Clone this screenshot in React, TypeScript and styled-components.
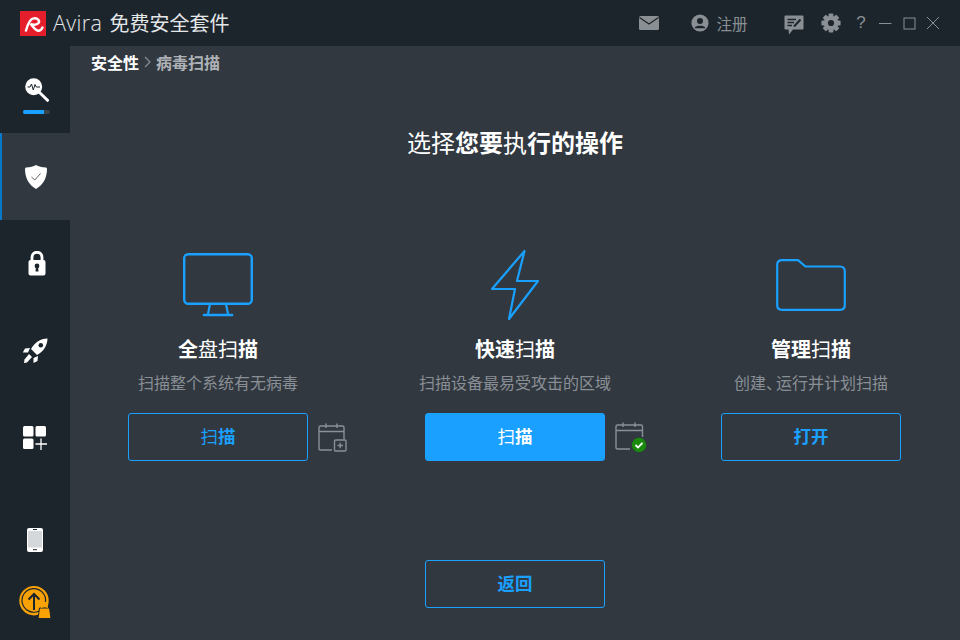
import React from 'react';
import styled, {createGlobalStyle} from "styled-components";

const GlobalStyle = createGlobalStyle`
  html, body {
    margin: 0;
    padding: 0;
    background: #1c252c;
  }

  * {
    box-sizing: border-box;
  }
`;

const Window = styled.div`
  width: 960px;
  height: 640px;
  display: grid;
  grid-template-columns: 70px 1fr;
  grid-template-rows: 46px 1fr;
  background: #1c252c;
  color: white;
  overflow: hidden;
  font-family: "Noto Sans CJK SC", "Liberation Sans", sans-serif;
`;

const TitleBar = styled.header`
  grid-column: span 2;
  display: flex;
  align-items: center;
  padding-left: 20px;
  background: #1c252c;
`;

const Brand = styled.div`
  display: flex;
  align-items: center;
  gap: 7px;
  flex: 1;
  font-size: 20px;
  color: #e4e6e8;
`;

const BrandName = styled.span`
  font-family: "Open Sans", "Noto Sans CJK SC", sans-serif;
  font-size: 21.5px;
  font-weight: 300;
  letter-spacing: 0.4px;
  margin-right: 7px;
`;

const BrandWords = styled.div`
  display: flex;
  align-items: center;
  line-height: 28px;
`;

const TitleTools = styled.div`
  display: flex;
  align-items: center;
  height: 100%;
  color: #8a8f94;
`;

const ToolSlot = styled.div<{ width: number }>`
  width: ${props => props.width}px;
  display: flex;
  align-items: center;
  justify-content: center;
  gap: 7px;
  font-size: 15.5px;
`;

const HelpMark = styled.span`
  font-family: "Liberation Sans", sans-serif;
  font-size: 17px;
`;

const SideBar = styled.nav`
  display: flex;
  flex-direction: column;
`;

const SideItem = styled.div<{ active?: boolean; top?: number; left?: number }>`
  height: 87px;
  display: flex;
  flex-direction: column;
  align-items: center;
  justify-content: center;
  background: ${props => props.active ? "#313840" : "transparent"};
  border-left: ${props => props.active ? "2px solid #0a78c8" : "none"};
  padding-top: ${props => props.top ?? 0}px;
  padding-left: ${props => props.left ?? 0}px;
`;

const ScanMeter = styled.div`
  width: 27px;
  height: 4px;
  border-radius: 2px;
  margin-top: 8px;
  background: #3a424a;
  overflow: hidden;

  div {
    width: 21px;
    height: 100%;
    background: #1aa0ff;
  }
`;

const SideBottom = styled.div`
  margin-top: auto;
  display: flex;
  flex-direction: column;
  align-items: center;
  gap: 34px;
  padding-bottom: 20px;
`;

const Main = styled.main`
  background: #313840;
  display: flex;
  flex-direction: column;
  align-items: center;
`;

const Crumbs = styled.div`
  align-self: flex-start;
  display: flex;
  align-items: center;
  height: 34px;
  margin-bottom: -2px;
  padding: 0 0 2px 21px;
  font-size: 16px;
  font-weight: 700;
  color: #ffffff;
`;

const CrumbCurrent = styled.span`
  color: #aeb2b6;
`;

const Heading = styled.h1`
  margin: 44px 0 0;
  height: 40px;
  line-height: 40px;
  font-size: 24px;
  font-weight: 700;
  color: #ffffff;
`;

const Thin = styled.span`
  font-weight: 400;
`;

const Options = styled.section`
  width: 100%;
  margin-top: 87px;
  display: grid;
  grid-template-columns: 296px 298px 294px;
`;

const Option = styled.article`
  display: flex;
  flex-direction: column;
  align-items: center;
`;

const IconBox = styled.div`
  height: 72px;
  display: flex;
  align-items: center;
  justify-content: center;
`;

const OptionTitle = styled.h2`
  margin: 13px 0 0;
  height: 30px;
  line-height: 30px;
  font-size: 20px;
  font-weight: 700;
  color: #ffffff;
`;

const OptionText = styled.p`
  margin: 6px 0 0;
  height: 24px;
  line-height: 24px;
  font-size: 16px;
  color: #8a8f95;
`;

const NarrowMark = styled.span`
  letter-spacing: -6px;
`;

const ActionRow = styled.div`
  width: 100%;
  margin-top: 19px;
  display: grid;
  grid-template-columns: 1fr 180px 1fr;
  align-items: center;
`;

const ScheduleIcon = styled.div`
  padding-left: 10px;
  display: flex;
`;

const Button = styled.button<{ primary?: boolean }>`
  width: 180px;
  height: 48px;
  padding: 0 0 3px;
  border: 1px solid #1aa0ff;
  border-radius: 3px;
  font-family: inherit;
  font-size: 17.5px;
  font-weight: 700;
  background: ${props => props.primary ? "#1aa0ff" : "transparent"};
  color: ${props => props.primary ? "#ffffff" : "#1aa0ff"};
`;

const BackRow = styled.div`
  margin-top: 99px;
`;

function AviraLogo() {
    return (
        <svg width="26" height="25" viewBox="0 0 26 25">
            <rect width="26" height="25" fill="#e41f2b"/>
            <path d="M6 19.5 C7.5 14 10 7.5 14 7.3 C18 7 20 10 18.5 12 C16.5 14.3 12 14 10.5 12.8 C13 15 15 19.8 18.5 19.8 C20 19.8 21.5 18.5 22.5 16.5"
                  fill="none" stroke="#fff" strokeWidth="2.5" strokeLinecap="round"/>
        </svg>
    );
}

function MailIcon() {
    return (
        <svg width="20" height="14" viewBox="0 0 20 14">
            <rect width="20" height="14" rx="1.5" fill="#8a8f94"/>
            <path d="M0.5 1.5 L10 8 L19.5 1.5" fill="none" stroke="#1c252c" strokeWidth="1.2"/>
        </svg>
    );
}

function UserIcon() {
    return (
        <svg width="18" height="18" viewBox="0 0 18 18">
            <circle cx="9" cy="9" r="8.6" fill="#8a8f94"/>
            <circle cx="9" cy="7" r="3" fill="#1c252c"/>
            <path d="M3.8 13.6 C5 11 13 11 14.2 13.6 L14.2 14.2 L3.8 14.2 Z" fill="#1c252c"/>
        </svg>
    );
}

function FeedbackIcon() {
    return (
        <svg width="20" height="24" viewBox="0 -4 20 24">
            <path d="M0.5 1.5 Q0.5 0.5 1.5 0.5 H18.5 Q19.5 0.5 19.5 1.5 V13.5 Q19.5 14.5 18.5 14.5 H9 L5 19.5 L4.5 14.5 H1.5 Q0.5 14.5 0.5 13.5 Z"
                  fill="#8a8f94"/>
            <path d="M3.5 4.5 H12 M3.5 7.5 H10 M3.5 10.5 H8" stroke="#1c252c" strokeWidth="1.3"/>
            <path d="M10 11.5 L16.5 4.5" stroke="#1c252c" strokeWidth="2"/>
        </svg>
    );
}

function GearIcon() {
    const teeth = [0, 45, 90, 135];
    return (
        <svg width="20" height="20" viewBox="0 0 20 20">
            {teeth.map(deg => (
                <rect key={deg} x="7.6" y="0.4" width="4.8" height="19.2" rx="1" fill="#8a8f94"
                      transform={`rotate(${deg} 10 10)`}/>
            ))}
            <circle cx="10" cy="10" r="7.2" fill="#8a8f94"/>
            <circle cx="10" cy="10" r="3.1" fill="#1c252c"/>
        </svg>
    );
}

function MinimizeIcon() {
    return (
        <svg width="13" height="13" viewBox="0 0 13 13">
            <path d="M0 6.5 H12.5" stroke="#8a8f94" strokeWidth="1"/>
        </svg>
    );
}

function MaximizeIcon() {
    return (
        <svg width="13" height="13" viewBox="0 0 13 13">
            <rect x="1" y="1" width="11" height="11" fill="none" stroke="#8a8f94" strokeWidth="1"/>
        </svg>
    );
}

function CloseIcon() {
    return (
        <svg width="14" height="14" viewBox="0 0 14 14">
            <path d="M1 1 L13 13 M13 1 L1 13" stroke="#8a8f94" strokeWidth="1"/>
        </svg>
    );
}

function ScanSideIcon() {
    return (
        <svg width="24" height="24" viewBox="0 0 24 24">
            <path d="M14 14 L22.5 22.3" stroke="#fff" strokeWidth="3" strokeLinecap="round"/>
            <circle cx="8.7" cy="8.7" r="8.5" fill="#fff"/>
            <path d="M2.5 9 H5 L6.5 6 L8.3 12 L10 6.5 L11.3 9 H15" fill="none" stroke="#1c252c" strokeWidth="1"/>
        </svg>
    );
}

function ShieldIcon() {
    return (
        <svg width="22" height="24" viewBox="0 0 22 24">
            <path d="M11 0 C13.5 1.5 17 2.3 21 2.5 Q22 2.6 22 4 C22 13 18 20 11 24 C4 20 0 13 0 4 Q0 2.6 1 2.5 C5 2.3 8.5 1.5 11 0 Z" fill="#fff"/>
            <path d="M6.5 12 L9.8 15 L15.5 8.5" fill="none" stroke="#4c5259" strokeWidth="0.9"/>
        </svg>
    );
}

function LockIcon() {
    return (
        <svg width="21" height="25" viewBox="-3 0 21 25">
            <path d="M4 10 V6.5 C4 -0.5 14 -0.5 14 6.5 V10" fill="none" stroke="#fff" strokeWidth="2.8"/>
            <rect x="0.5" y="9" width="17" height="15.5" rx="2" fill="#fff"/>
            <circle cx="9" cy="15" r="2.4" fill="#1c252c"/>
            <path d="M8 15 H10 L10.5 20.5 H7.5 Z" fill="#1c252c"/>
        </svg>
    );
}

function RocketIcon() {
    return (
        <svg width="26" height="26" viewBox="0 0 26 26">
            <path d="M25.5 0.5 C18 0.8 12.5 4.5 9 11 L15 17 C21.5 13.5 25.2 8 25.5 0.5 Z" fill="#fff"/>
            <circle cx="18.8" cy="7.3" r="2.3" fill="#1c252c"/>
            <path d="M8 10 L3 10.5 L0.8 14.5 L6 14.5 Z M16 18 L15.5 23 L11.5 25 L11.5 20 Z" fill="#fff"/>
            <path d="M7 16 L10 19 L5 24.5 L2 25 L2.5 21.5 Z" fill="#fff"/>
        </svg>
    );
}

function AppsIcon() {
    return (
        <svg width="24" height="24" viewBox="0.5 0.5 24 24">
            <rect x="0.5" y="0.5" width="10.5" height="10.5" rx="1.5" fill="#fff"/>
            <rect x="13" y="0.5" width="10.5" height="10.5" rx="1.5" fill="#fff"/>
            <rect x="0.5" y="13" width="10.5" height="10.5" rx="1.5" fill="#fff"/>
            <path d="M18.5 13 V24.5 M13 18.5 H24.5" stroke="#fff" strokeWidth="1.3"/>
        </svg>
    );
}

function PhoneIcon() {
    return (
        <svg width="16" height="24" viewBox="0 0 16 24">
            <rect width="16" height="24" rx="2" fill="#fff"/>
            <rect x="1" y="3" width="14" height="16.5" fill="#d5d8da"/>
            <path d="M6 1.5 H10 M6 21.7 H10" stroke="#1c252c" strokeWidth="1"/>
        </svg>
    );
}

function UpgradeIcon() {
    return (
        <svg width="34" height="34" viewBox="0 0 34 34">
            <circle cx="16" cy="14.7" r="14.7" fill="#f9a206"/>
            <path d="M21 25 A11.8 11.8 0 1 1 27.5 16" fill="none" stroke="#1c252c" strokeWidth="1.2"/>
            <path d="M16 24 V8 M10.5 13.5 L16 8 L21.5 13.5" fill="none" stroke="#1c252c" strokeWidth="2"/>
            <path d="M21.5 22 H31.5 L33 32.5 H20 Z" fill="#f9a206" stroke="#1c252c" strokeWidth="1"/>
            <path d="M23.8 22 V20.5 C23.8 16.5 29.2 16.5 29.2 20.5 V22" fill="none" stroke="#f9a206" strokeWidth="1.3"/>
        </svg>
    );
}

function MonitorIcon() {
    return (
        <svg width="70" height="64" viewBox="0 0 70 64">
            <rect x="1.2" y="1.2" width="67.6" height="49.6" rx="4" fill="none" stroke="#1aa0ff" strokeWidth="2.4"/>
            <path d="M27 51 L25 61 M43 51 L45 61" fill="none" stroke="#1aa0ff" strokeWidth="2.2"/>
            <path d="M21 62 H49" stroke="#1aa0ff" strokeWidth="2.6" strokeLinecap="round"/>
        </svg>
    );
}

function BoltIcon() {
    return (
        <svg width="50" height="72" viewBox="0 0 50 72">
            <path d="M34.5 2 L27 32 H48 L19 70 L25 40 H2 Z" fill="none" stroke="#1aa0ff" strokeWidth="2.2" strokeLinejoin="round"/>
        </svg>
    );
}

function FolderIcon() {
    return (
        <svg width="70" height="52" viewBox="0 0 70 52">
            <path d="M1.2 6 Q1.2 1.2 6 1.2 H22 L29.5 7.5 H64 Q68.8 7.5 68.8 12.5 V46 Q68.8 50.8 64 50.8 H6 Q1.2 50.8 1.2 46 Z"
                  fill="none" stroke="#1aa0ff" strokeWidth="2.2" strokeLinejoin="round"/>
        </svg>
    );
}

function CalendarPlusIcon() {
    return (
        <svg width="29" height="29" viewBox="0 0 29 29">
            <path d="M14 27 H2.5 Q1 27 1 25.5 V4.5 Q1 3 2.5 3 H24.5 Q26 3 26 4.5 V16" fill="none" stroke="#8a9097" strokeWidth="1.4"/>
            <path d="M1 8.5 H26 M8 0.5 V5 M19 0.5 V5" stroke="#8a9097" strokeWidth="1.4"/>
            <rect x="16.5" y="17" width="11.5" height="11" rx="1" fill="none" stroke="#8a9097" strokeWidth="1.4"/>
            <path d="M22.2 19.8 V25.2 M19.5 22.5 H25" stroke="#8a9097" strokeWidth="1.4"/>
        </svg>
    );
}

function CalendarCheckIcon() {
    return (
        <svg width="32" height="31" viewBox="0 0 32 31">
            <path d="M15 27 H2.5 Q1 27 1 25.5 V4.5 Q1 3 2.5 3 H26 Q27.5 3 27.5 4.5 V15" fill="none" stroke="#8a9097" strokeWidth="1.4"/>
            <path d="M1 8.5 H27.5 M8 0.5 V5 M20 0.5 V5" stroke="#8a9097" strokeWidth="1.4"/>
            <circle cx="24" cy="23" r="7.2" fill="#1a8a0c"/>
            <path d="M20.5 23 L23 25.5 L27.5 20.8" fill="none" stroke="#fff" strokeWidth="1.8"/>
        </svg>
    );
}

function App() {
    return (
        <>
            <GlobalStyle/>
            <Window>
                <TitleBar>
                    <Brand>
                        <AviraLogo/>
                        <BrandWords>
                            <BrandName>Avira</BrandName>
                            <span>免费安全套件</span>
                        </BrandWords>
                    </Brand>
                    <TitleTools>
                        <ToolSlot width={30}><MailIcon/></ToolSlot>
                        <ToolSlot width={111}><UserIcon/><span>注册</span></ToolSlot>
                        <ToolSlot width={38}><FeedbackIcon/></ToolSlot>
                        <ToolSlot width={36}><GearIcon/></ToolSlot>
                        <ToolSlot width={24}><HelpMark>?</HelpMark></ToolSlot>
                        <ToolSlot width={24}><MinimizeIcon/></ToolSlot>
                        <ToolSlot width={24}><MaximizeIcon/></ToolSlot>
                        <ToolSlot width={24}><CloseIcon/></ToolSlot>
                        <ToolSlot width={15}/>
                    </TitleTools>
                </TitleBar>
                <SideBar>
                    <SideItem top={13} left={3}>
                        <ScanSideIcon/>
                        <ScanMeter>
                            <div/>
                        </ScanMeter>
                    </SideItem>
                    <SideItem active><ShieldIcon/></SideItem>
                    <SideItem><LockIcon/></SideItem>
                    <SideItem><RocketIcon/></SideItem>
                    <SideItem><AppsIcon/></SideItem>
                    <SideBottom>
                        <PhoneIcon/>
                        <UpgradeIcon/>
                    </SideBottom>
                </SideBar>
                <Main>
                    <Crumbs>
                        <span>安全性</span>
                        <svg width="17" height="12" viewBox="0 0 17 12">
                            <path d="M6 1 L11 6 L6 11" fill="none" stroke="#8a8f95" strokeWidth="1.2"/>
                        </svg>
                        <CrumbCurrent>病毒扫描</CrumbCurrent>
                    </Crumbs>
                    <Heading>
                        <Thin>选择</Thin>您要<Thin>执</Thin>行的操作
                    </Heading>
                    <Options>
                        <Option>
                            <IconBox><MonitorIcon/></IconBox>
                            <OptionTitle>全<Thin>盘扫</Thin>描</OptionTitle>
                            <OptionText>扫描整个系统有无病毒</OptionText>
                            <ActionRow>
                                <span/>
                                <Button><Thin>扫</Thin>描</Button>
                                <ScheduleIcon><CalendarPlusIcon/></ScheduleIcon>
                            </ActionRow>
                        </Option>
                        <Option>
                            <IconBox><BoltIcon/></IconBox>
                            <OptionTitle>快速<Thin>扫</Thin>描</OptionTitle>
                            <OptionText>扫描设备最易受攻击的区域</OptionText>
                            <ActionRow>
                                <span/>
                                <Button primary><Thin>扫</Thin>描</Button>
                                <ScheduleIcon><CalendarCheckIcon/></ScheduleIcon>
                            </ActionRow>
                        </Option>
                        <Option>
                            <IconBox><FolderIcon/></IconBox>
                            <OptionTitle>管理<Thin>扫</Thin>描</OptionTitle>
                            <OptionText>创建<NarrowMark>、</NarrowMark>运行并计划扫描</OptionText>
                            <ActionRow>
                                <span/>
                                <Button>打开</Button>
                                <span/>
                            </ActionRow>
                        </Option>
                    </Options>
                    <BackRow>
                        <Button>返回</Button>
                    </BackRow>
                </Main>
            </Window>
        </>
    );
}

export default App;
